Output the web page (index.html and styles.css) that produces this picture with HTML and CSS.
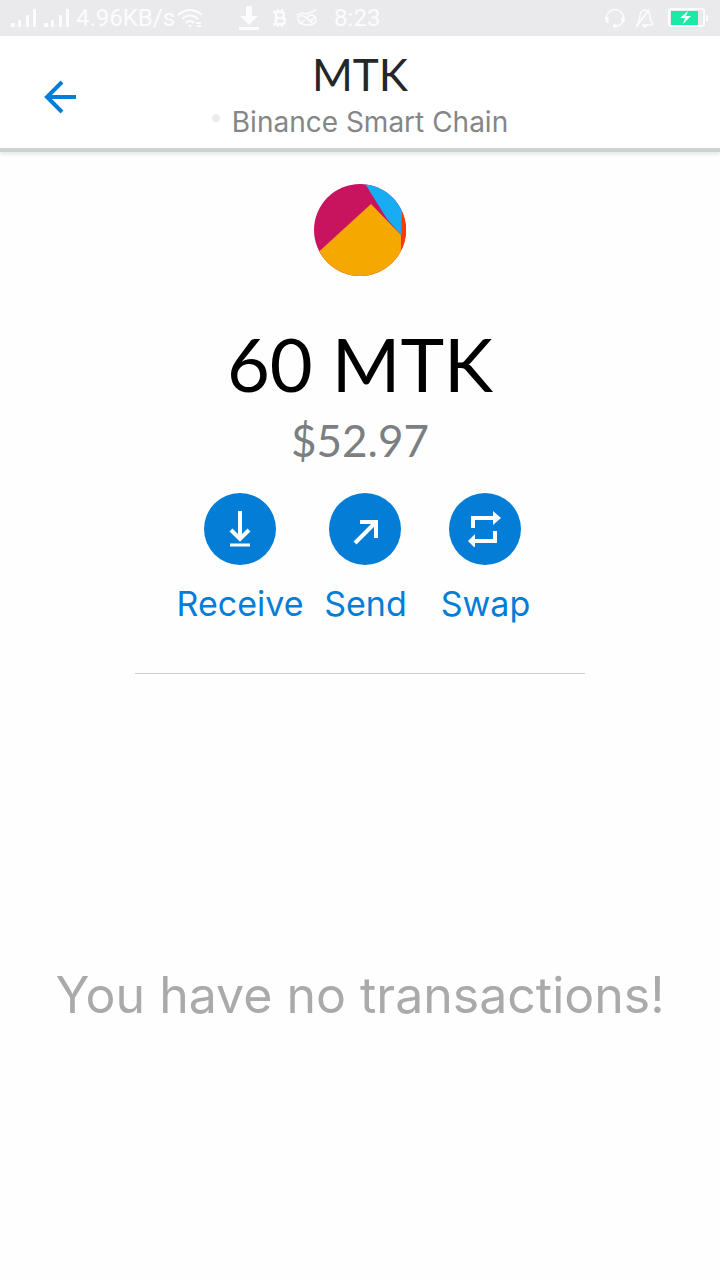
FILE: index.html
```html
<!DOCTYPE html>
<html lang="en">
<head>
    <meta charset="UTF-8">
    <title>MTK - Wallet</title>
    <meta name="viewport" content="width=device-width, initial-scale=1.0">
    <link rel="stylesheet" href="styles.css">
</head>
<body>
    <!-- Status bar -->
    <div class="status-bar">
        <div class="status-group">
            <svg class="signal" width="60" height="20" viewBox="0 0 60 20" fill="currentColor">
                <path d="M1 15h4v4h-4zM8 12h3v7h-3zM16 7h3v12h-3zM23 1h3v18h-3zM34 15h4v4h-4zM41 12h3v7h-3zM49 7h3v12h-3zM56 1h3v18h-3z"/>
            </svg>
            <span class="speed">4.96KB/s</span>
            <svg class="wifi" width="26" height="20" viewBox="0 0 26 20" fill="none" stroke="currentColor" stroke-width="2">
                <path d="M1 7Q13-3 25 7M5 11Q13 4 21 11M9 15Q13 11 17 15"/>
                <path d="M11 17h4l-2 3z" fill="currentColor" stroke="none"/>
                <path d="M19 15h5M20 18h4"/>
            </svg>
            <svg class="download" width="20" height="24" viewBox="0 0 20 24" fill="currentColor">
                <path d="M7 0h6v10h6l-9 9-9-9h6zM0 21h20v3h-20z"/>
            </svg>
            <svg class="coin" width="13" height="18" viewBox="0 0 13 18" fill="none" stroke="currentColor" stroke-width="2.4">
                <path d="M0 3h8q3 0 3 3t-3 3h-5h6q3 0 3 3t-3 3h-9M3 3v12"/>
                <path d="M5 0v2M9 0v2M5 16v2M9 16v2" stroke-width="2"/>
            </svg>
            <svg class="no-view" width="22" height="18" viewBox="0 0 22 18" fill="none" stroke="currentColor" stroke-width="1.5">
                <path d="M1 6Q6 3 11 5L20 1M1 9q4-4 8-1l8 7M2 10q1 5 8 6h5q5-1 5-6-1-4-5-4-5 1-3 5M3 15l6-4M14 10l2 2 3-5"/>
            </svg>
            <span class="clock">8:23</span>
        </div>
        <div class="status-group">
            <svg width="20" height="20" viewBox="0 0 20 20" fill="none" stroke="currentColor" stroke-width="1.5">
                <path d="M3 15Q-1 8 4 4 10-1 16 4q5 6 1 11-2 3-6 3"/>
                <path d="M2 9v5M18 9v5M8 18h4" stroke-width="3"/>
            </svg>
            <svg class="bell" width="19" height="20" viewBox="0 0 19 20" fill="none" stroke="currentColor" stroke-width="1.5">
                <path d="M1 17h3M3 15Q5 12 5 7q1-5 5-5 5 1 5 6 0 5 3 8l-2 1h-9M8 17q2 4 4 0M1 19L14 2"/>
            </svg>
            <svg width="40" height="20" viewBox="0 0 40 20">
                <rect class="battery-case" x="1" y="1" width="35" height="17" rx="2"/>
                <rect class="battery-level" x="3" y="3" width="27" height="14"/>
                <path class="battery-bolt" d="M20 3l-8 7h5l-2 6 8-8h-5zM38 7h2v6h-2z"/>
            </svg>
        </div>
    </div>

    <!-- Header -->
    <header class="header">
        <button class="back-btn" type="button" aria-label="Back">
            <svg width="36" height="36" viewBox="0 0 36 36" fill="none" stroke="currentColor" stroke-width="4">
                <path d="M34 18H5M20 3L5 18l15 15"/>
            </svg>
        </button>
        <div class="header-text">
            <h1 class="title">MTK</h1>
            <div class="network"><span class="network-dot"></span>Binance Smart Chain</div>
        </div>
    </header>

    <!-- Token details -->
    <main class="content">
        <svg class="avatar" width="92" height="92" viewBox="0 0 92 92">
            <defs>
                <clipPath id="avatarClip"><circle cx="46" cy="46" r="46"/></clipPath>
            </defs>
            <g clip-path="url(#avatarClip)">
                <rect width="92" height="92" fill="#c8145f"/>
                <path d="M50-2L73 35l15 17V-2z" fill="#18adf2"/>
                <path d="M88 24l7-3v55H87z" fill="#f73b06"/>
                <path d="M57 20L87 51v20l-3 23H-2V74z" fill="#f5a800"/>
            </g>
        </svg>
        <div class="amount">60 MTK</div>
        <div class="fiat">$52.97</div>

        <div class="actions">
            <button class="action" type="button">
                <span class="action-icon">
                    <svg width="36" height="36" viewBox="0 0 36 36" fill="none" stroke="currentColor" stroke-width="4">
                        <path d="M18 0v28M9 19l9 9 9-9"/>
                        <path d="M8 34h20" stroke-width="3"/>
                    </svg>
                </span>
                <span>Receive</span>
            </button>
            <button class="action" type="button">
                <span class="action-icon">
                    <svg width="36" height="36" viewBox="0 0 36 36" fill="none" stroke="currentColor" stroke-width="4">
                        <path d="M8 32L29 11M13 11h16v16"/>
                    </svg>
                </span>
                <span>Send</span>
            </button>
            <button class="action" type="button">
                <span class="action-icon">
                    <svg width="36" height="36" viewBox="0 0 36 36" fill="currentColor">
                        <path d="M4 17V5h22V0l8 7-8 7V9H8v8zM30 20v12H8v5l-7-7 7-7v5h18v-8z"/>
                    </svg>
                </span>
                <span>Swap</span>
            </button>
        </div>

        <hr class="divider">
        <p class="empty">You have no transactions!</p>
    </main>
</body>
</html>
```
FILE: styles.css
```css
* { box-sizing: border-box; }
body {
    margin: 0;
    font-family: Inter, sans-serif;
    background: #fefefe;
}
button {
    padding: 0;
    border: none;
    background: none;
    font: inherit;
    color: #037dd6;
    cursor: pointer;
}
svg { display: block; }

.status-bar {
    display: flex;
    justify-content: space-between;
    align-items: center;
    height: 36px;
    padding: 0 12px 0 10px;
    background: #eaeaec;
    color: #fcfcfc;
    font-family: Roboto, sans-serif;
    font-size: 24px;
}
.status-group {
    display: flex;
    align-items: center;
}
.speed { margin: 0 2px 0 6px; }
.download { margin: 0 14px 0 36px; }
.coin { margin-right: 10px; }
.clock { margin-left: 16px; }
.bell { margin: 0 14px 0 10px; }
.battery-case { fill: none; stroke: #fcfcfc; stroke-width: 2; }
.battery-level { fill: #1de9a4; }
.battery-bolt { fill: #fcfcfc; }

.header {
    display: grid;
    grid-template-columns: 120px 1fr 120px;
    align-items: center;
    height: 116px;
    padding-top: 4px;
    border-bottom: 4px solid #cbd3d3;
    box-shadow: 0 2px 4px #e4e4e4;
    background: #fff;
}
.back-btn {
    justify-self: center;
    margin-top: 6px;
}
.header-text { text-align: center; }
.title {
    margin: 0;
    font-family: Lato, sans-serif;
    font-size: 44px;
    line-height: 56px;
    font-weight: 400;
    color: #24272a;
}
.network {
    display: flex;
    justify-content: center;
    align-items: center;
    gap: 12px;
    font-size: 28px;
    line-height: 40px;
    color: #848688;
}
.network-dot {
    width: 8px;
    height: 8px;
    margin-bottom: 8px;
    border-radius: 50%;
    background: #ececec;
}

.content {
    display: flex;
    flex-direction: column;
    align-items: center;
    padding-top: 32px;
}
.amount {
    margin-top: 40px;
    font-family: Lato, sans-serif;
    font-size: 74px;
    line-height: 96px;
    color: #000;
}
.fiat {
    font-family: Lato, sans-serif;
    font-size: 44px;
    line-height: 56px;
    color: #7c7f82;
}
.actions {
    display: flex;
    margin-top: 25px;
}
.action {
    display: flex;
    flex-direction: column;
    align-items: center;
    gap: 17px;
    min-width: 120px;
    padding: 0 2px;
    font-size: 34px;
    line-height: 44px;
}
.action-icon {
    display: flex;
    justify-content: center;
    align-items: center;
    width: 72px;
    height: 72px;
    border-radius: 50%;
    background: #037dd6;
    color: #fff;
}
.divider {
    width: 62.5%;
    margin: 47px 0 0;
    border: none;
    border-top: 1px solid #cfcfcf;
}
.empty {
    margin: 289px 0 0;
    font-size: 50px;
    line-height: 64px;
    color: #aaa;
}
```
